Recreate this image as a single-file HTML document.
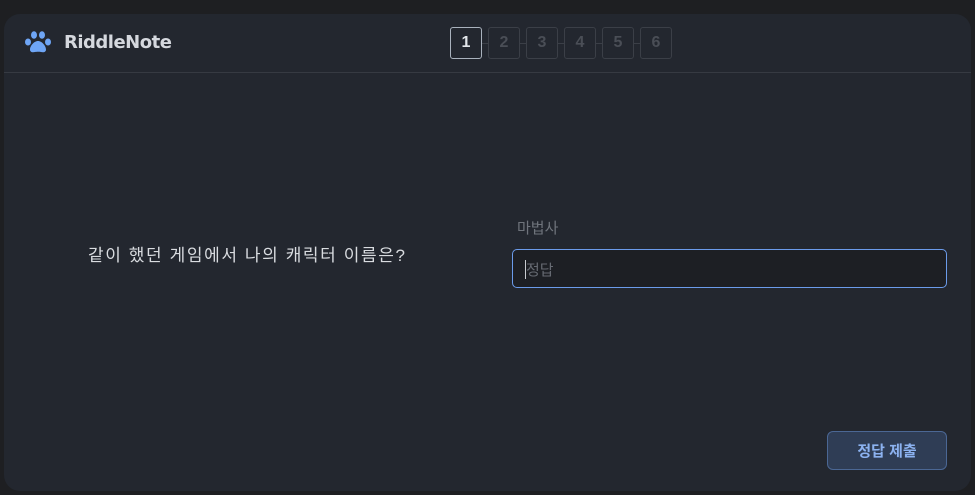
<!DOCTYPE html>
<html><head><meta charset="utf-8"><style>
*{box-sizing:border-box;margin:0;padding:0}
body{width:975px;height:495px;background:#1e1f22;font-family:"Liberation Sans","Noto Sans CJK KR",sans-serif;overflow:hidden;position:relative}
.card{position:absolute;left:4px;top:14px;width:967px;height:477px;background:#23272f;border-radius:16px}
.hdr{position:absolute;left:0;top:0;width:100%;height:59px;border-bottom:1px solid #363a42}
.logo{position:absolute;left:20px;top:16px;display:flex;align-items:center}
.logo span{color:#d5d8de;font-weight:bold;font-size:18px;margin-left:12px;font-family:"DejaVu Sans","Liberation Sans",sans-serif;letter-spacing:-0.5px}
.steps{position:absolute;left:446px;top:13px;display:flex;align-items:center}
.st{width:32px;height:32px;border:1px solid #3b3f47;border-radius:3px;color:#4a4e56;font-size:16px;font-weight:bold;display:flex;align-items:center;justify-content:center}
.st.a{border-color:#a9b2bd;color:#e2e6ea}
.ln{width:6px;height:1px;background:#3b3f47}
.q{position:absolute;left:84px;top:227px;color:#d9dce0;font-size:17px;letter-spacing:1.6px}
.lbl{position:absolute;left:513px;top:203px;color:#6f747c;font-size:15px}
.inp{position:absolute;left:508px;top:235px;width:435px;height:39px;border:1px solid #6b9bea;border-radius:5px;background:#1d1f24;color:#666a72;font-size:15px;padding:9px 0 0 13px}
.inp i{position:absolute;left:12px;top:10px;width:1px;height:19px;background:#c8cbd0}
.btn{position:absolute;left:823px;top:417px;width:120px;height:39px;border:1px solid #4b6794;border-radius:6px;background:#2f3d55;color:#8cb2f0;font-weight:bold;font-size:15px;display:flex;align-items:center;justify-content:center}
</style></head><body>
<div class="card">
<div class="hdr">
<div class="logo"><svg width="28" height="24" viewBox="0 0 28 24"><g fill="#6ea5f5"><ellipse cx="4" cy="12" rx="3" ry="3.5"/><ellipse cx="10" cy="5" rx="3" ry="3.8"/><ellipse cx="18" cy="5" rx="3" ry="3.8"/><ellipse cx="24" cy="12" rx="3" ry="3.5"/><path d="M14 11c-4 0-8 5-8 8.5 0 3 3 3 5 2.5 1.5-.4 4.5-.4 6 0 2 .5 5 .5 5-2.5 0-3.5-4-8.5-8-8.5z"/></g></svg><span>RiddleNote</span></div>
<div class="steps"><div class="st a">1</div><div class="ln"></div><div class="st">2</div><div class="ln"></div><div class="st">3</div><div class="ln"></div><div class="st">4</div><div class="ln"></div><div class="st">5</div><div class="ln"></div><div class="st">6</div></div>
</div>
<div class="q">같이 했던 게임에서 나의 캐릭터 이름은?</div>
<div class="lbl">마법사</div>
<div class="inp"><i></i>정답</div>
<div class="btn">정답 제출</div>
</div>
</body></html>
